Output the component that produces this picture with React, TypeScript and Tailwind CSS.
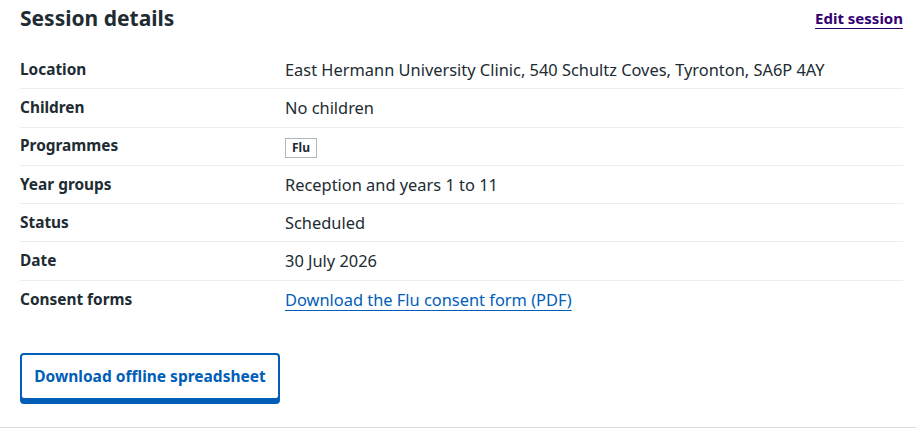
import React from 'react';

const rows: { label: string; value: React.ReactNode }[] = [
  { label: 'Location', value: 'East Hermann University Clinic, 540 Schultz Coves, Tyronton, SA6P 4AY' },
  { label: 'Children', value: 'No children' },
  {
    label: 'Programmes',
    value: (
      <span className="inline-block border border-[#aeb7bd] px-[6px] py-[1px] align-middle text-[12px] leading-[16px] font-bold text-[#212b32]">
        Flu
      </span>
    ),
  },
  { label: 'Year groups', value: 'Reception and years 1 to 11' },
  { label: 'Status', value: 'Scheduled' },
  { label: 'Date', value: '30 July 2026' },
  {
    label: 'Consent forms',
    value: (
      <a href="#" className="text-[#005eb8] underline underline-offset-[4px] decoration-1">
        Download the Flu consent form (PDF)
      </a>
    ),
  },
];

const App = () => {
  return (
    <div
      className="min-h-[434px] w-[916px] bg-white text-[#212b32]"
      style={{ fontFamily: '"Noto Sans", "Liberation Sans", Arial, sans-serif' }}
    >
      <div className="border-b border-[#d8dde0] pl-5 pr-[13px] pb-[27px]">
        {/* Header */}
        <div className="flex h-[36px] items-center justify-between">
          <h2 className="text-[21px] font-bold leading-[28px]">Session details</h2>
          <a href="#" className="text-[15px] font-bold text-[#330072] underline underline-offset-[4px] decoration-1">
            Edit session
          </a>
        </div>

        {/* Summary list */}
        <dl className="mt-[15px]">
          {rows.map((row, i) => (
            <div
              key={row.label}
              className={`flex h-[38.3px] items-center leading-[24px] ${
                i < rows.length - 1 ? 'border-b border-[#e8edee]' : ''
              }`}
            >
              <dt className="w-[265px] shrink-0 text-[15.4px] font-bold">{row.label}</dt>
              <dd className="text-[16.4px]">{row.value}</dd>
            </div>
          ))}
        </dl>

        {/* Offline spreadsheet */}
        <button className="mt-[34px] h-[47px] w-[260px] rounded-[4px] border-2 border-[#005eb8] bg-white text-[15.5px] font-bold text-[#005eb8] shadow-[0_4px_0_#005eb8]">
          Download offline spreadsheet
        </button>
      </div>
    </div>
  );
};

export default App;
